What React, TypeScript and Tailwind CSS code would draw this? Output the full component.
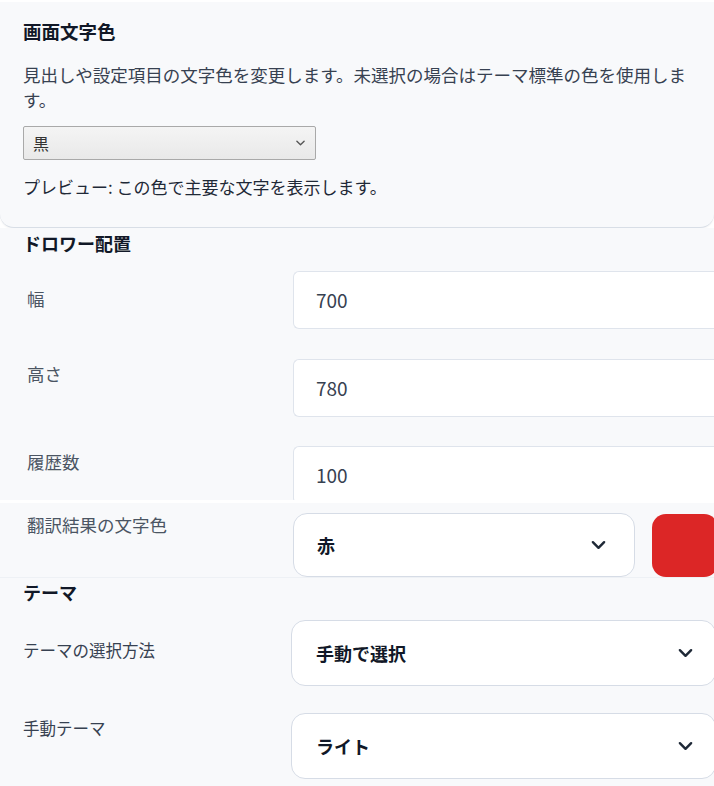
import React from 'react'

const font = { fontFamily: '"Noto Sans CJK JP", "Noto Sans", sans-serif' }

function Chevron({ className = '' }: { className?: string }) {
  return (
    <svg viewBox="0 0 16 10" className={className} fill="none" stroke="currentColor" strokeWidth={2.6} strokeLinecap="round" strokeLinejoin="round">
      <path d="M2 2l6 6 6-6" />
    </svg>
  )
}

function NumberRow({ label, value, labelPad, top }: { label: string; value: string; labelPad: string; top: string }) {
  return (
    <div className={`flex items-start ${top}`}>
      <div className={`w-[270px] shrink-0 pl-[4px] text-[17.5px] leading-[24px] text-[#4b5563] ${labelPad}`}>{label}</div>
      <div className="h-[58px] w-[440px] shrink-0 flex items-center pl-[22px] bg-white border-y border-l border-[#dfe4ec] rounded-l-[6px] text-[19px] text-[#374151]">
        {value}
      </div>
    </div>
  )
}

function SelectRow({ label, value, labelPad, top }: { label: string; value: string; labelPad: string; top: string }) {
  return (
    <div className={`flex items-start ${top}`}>
      <div className={`w-[268px] shrink-0 text-[16.5px] leading-[24px] text-[#374151] ${labelPad}`}>{label}</div>
      <div className="h-[66px] w-[425px] shrink-0 flex items-center justify-between pl-[24px] pr-[22px] bg-white border border-[#d6dce6] rounded-[14px]">
        <span className="text-[18px] font-semibold text-[#111827]">{value}</span>
        <Chevron className="w-[15px] h-[10px] text-[#1f2937]" />
      </div>
    </div>
  )
}

export default function App() {
  return (
    <div className="min-h-screen w-full overflow-hidden bg-white pt-[2px]" style={font}>
      {/* Screen text colour card */}
      <div className="h-[226px] bg-[#f8f9fb] rounded-b-[14px] border-b border-[#d8dee6] shadow-[0_1px_2px_rgba(15,23,42,0.06)] px-[23px] pt-[17px]">
        <h3 className="text-[18.5px] leading-[24px] font-bold text-[#111827]">画面文字色</h3>
        <p className="mt-[19px] text-[17.5px] leading-[25px] text-[#374151]">
          見出しや設定項目の文字色を変更します。未選択の場合はテーマ標準の色を使用します。
        </p>
        <div className="mt-[14px] w-[293px] h-[34px] flex items-center justify-between pl-[9px] pr-[10px] border border-[#a9a9a9] rounded-[2px] bg-gradient-to-b from-[#f4f4f4] to-[#e9e9e9]">
          <span className="text-[16px] text-[#333333]">黒</span>
          <svg viewBox="0 0 10 6" className="w-[9px] h-[6px] text-[#555555]" fill="none" stroke="currentColor" strokeWidth={1.5} strokeLinecap="round" strokeLinejoin="round">
            <path d="M1 1l4 4 4-4" />
          </svg>
        </div>
        <p className="mt-[14px] text-[17px] leading-[25px] text-[#1f2937]">プレビュー: この色で主要な文字を表示します。</p>
      </div>

      {/* Drawer placement */}
      <section className="h-[272px] overflow-hidden bg-[#f8f9fb] px-[23px] pt-[3px]">
        <h3 className="text-[18px] leading-[24px] font-bold text-[#111827]">ドロワー配置</h3>
        <NumberRow label="幅" value="700" labelPad="pt-[16px]" top="mt-[16px]" />
        <NumberRow label="高さ" value="780" labelPad="pt-[3px]" top="mt-[30px]" />
        <NumberRow label="履歴数" value="100" labelPad="pt-[4px]" top="mt-[29px]" />
      </section>

      <div className="h-[3px] bg-white" />

      {/* Translation text colour */}
      <div className="h-[75px] flex items-start bg-[#f8f9fb] border-b border-[#eef1f5] px-[23px]">
        <div className="w-[270px] shrink-0 pl-[4px] pt-[10px] text-[17.5px] leading-[24px] text-[#4b5563]">翻訳結果の文字色</div>
        <div className="mt-[10px] h-[64px] w-[342px] shrink-0 flex items-center justify-between pl-[23px] pr-[28px] bg-white border border-[#d6dce6] rounded-[14px]">
          <span className="text-[18px] font-semibold text-[#111827]">赤</span>
          <Chevron className="w-[15px] h-[10px] text-[#1f2937]" />
        </div>
        <div className="ml-[17px] mt-[11px] h-[63px] w-[66px] shrink-0 rounded-[14px] bg-[#dc2626]" />
      </div>

      {/* Theme */}
      <section className="bg-[#f8f9fb] px-[23px] pt-[2px] pb-[10px]">
        <h3 className="text-[18px] leading-[24px] font-bold text-[#111827]">テーマ</h3>
        <SelectRow label="テーマの選択方法" value="手動で選択" labelPad="pt-[18px]" top="mt-[16px]" />
        <SelectRow label="手動テーマ" value="ライト" labelPad="pt-[3px]" top="mt-[27px]" />
      </section>
    </div>
  )
}
